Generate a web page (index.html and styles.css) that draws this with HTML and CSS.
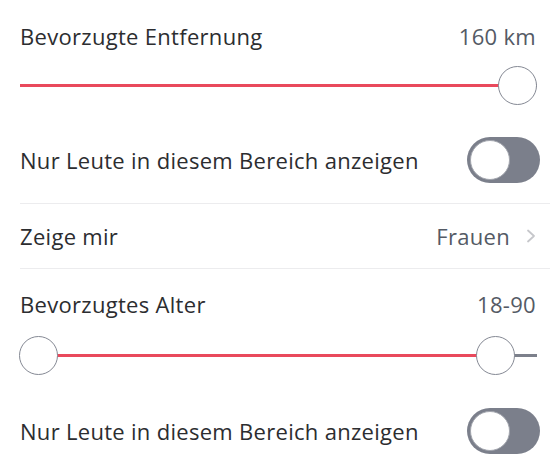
FILE: index.html
```html
<!DOCTYPE html>
<html>
<head>
    <meta charset="utf-8">
    <meta name="viewport" content="width=device-width, initial-scale=1">
    <title>Entdeckungseinstellungen</title>
    <link rel="stylesheet" href="styles.css">
</head>
<body>
    <div class="settings">
        <div class="range-block">
            <div class="range-head">
                <span class="label">Bevorzugte Entfernung</span>
                <span class="value">160 km</span>
            </div>
            <div class="slider">
                <div class="track"></div>
                <div class="fill fill-distance"></div>
                <div class="knob knob-distance"></div>
            </div>
        </div>

        <div class="toggle-row with-divider">
            <span class="label">Nur Leute in diesem Bereich anzeigen</span>
            <div class="switch"><div class="switch-knob"></div></div>
        </div>

        <div class="link-row">
            <span class="label">Zeige mir</span>
            <span class="value">Frauen
                <svg class="chevron" width="10" height="14" viewBox="0 0 10 14">
                    <polyline points="2,1.5 8,7 2,12.5" fill="none" stroke="#c6c7cb" stroke-width="1.8" stroke-linecap="round" stroke-linejoin="round"/>
                </svg>
            </span>
        </div>

        <div class="range-block age">
            <div class="range-head">
                <span class="label">Bevorzugtes Alter</span>
                <span class="value">18-90</span>
            </div>
            <div class="slider">
                <div class="track"></div>
                <div class="fill fill-age"></div>
                <div class="knob knob-min"></div>
                <div class="knob knob-max"></div>
            </div>
        </div>

        <div class="toggle-row last">
            <span class="label">Nur Leute in diesem Bereich anzeigen</span>
            <div class="switch"><div class="switch-knob"></div></div>
        </div>
    </div>
</body>
</html>
```

FILE: styles.css
```css
body {
    margin: 0;
    background-color: #fff;
    font-family: "Open Sans", Lato, sans-serif;
    color: #2c2d30;
}
.settings {
    padding-left: 20px;
}
.label,
.value {
    font-size: 22px;
    letter-spacing: 0.3px;
}
.value {
    color: #545a65;
    display: flex;
    align-items: center;
}
.range-head,
.toggle-row,
.link-row {
    display: flex;
    justify-content: space-between;
    align-items: center;
    padding-right: 14px;
}
.range-head {
    height: 28px;
    padding-top: 22px;
}
.age .range-head {
    padding-top: 21px;
}
.slider {
    position: relative;
    height: 40px;
    margin-top: 16px;
    margin-right: 13px;
}
.age .slider {
    margin-top: 18px;
}
.track {
    position: absolute;
    left: 0;
    right: 0;
    top: 18px;
    height: 3px;
    background-color: #7c808b;
}
.fill {
    position: absolute;
    top: 18px;
    height: 3px;
    background-color: #e9495c;
}
.fill-distance {
    left: 0;
    right: 20px;
}
.fill-age {
    left: 20px;
    right: 41px;
}
.knob {
    position: absolute;
    top: 0;
    width: 37px;
    height: 37px;
    border: 1.5px solid #858994;
    border-radius: 50%;
    background-color: #fff;
}
.knob-distance {
    right: 0;
}
.knob-min {
    left: -1px;
}
.knob-max {
    right: 22px;
}
.toggle-row {
    height: 46px;
    margin-top: 31px;
    padding-right: 10px;
}
.with-divider {
    padding-bottom: 20px;
    border-bottom: 1px solid #ececee;
}
.link-row {
    height: 64px;
    border-bottom: 1px solid #ececee;
}
.toggle-row.last {
    margin-top: 32px;
}
.switch {
    width: 73px;
    height: 46px;
    border-radius: 23px;
    background-color: #7b7f8b;
    position: relative;
}
.switch-knob {
    position: absolute;
    left: 3px;
    top: 3px;
    width: 38px;
    height: 38px;
    border: 1px solid #a3a6ae;
    border-radius: 50%;
    background-color: #fff;
}
.chevron {
    margin-left: 16px;
}
```
